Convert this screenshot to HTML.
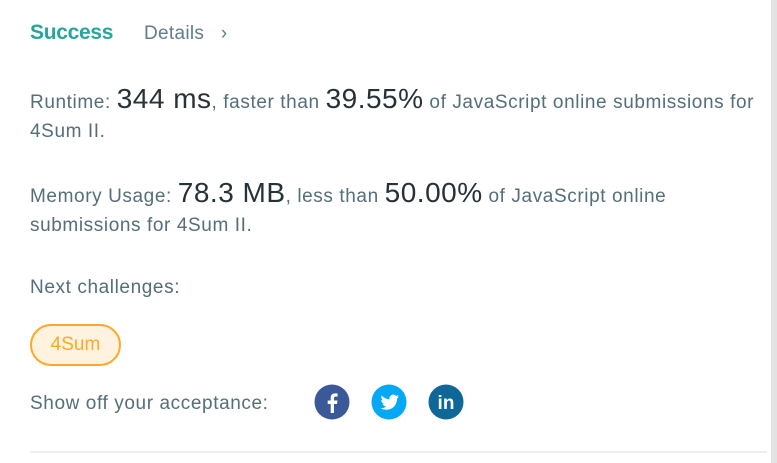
<!DOCTYPE html>
<html><head><meta charset="utf-8"><style>
body{margin:0;width:777px;height:463px;background:#fff;font-family:"Liberation Sans",sans-serif;color:#546e7a;position:relative;overflow:hidden}
.a{position:absolute;white-space:nowrap}
.t{font-size:19px;letter-spacing:0.6px}
.big{font-size:28px;color:#263238;letter-spacing:0.5px}
</style></head><body>
<div class="a" style="left:30px;top:21px;font-size:21px;font-weight:bold;color:#26a69a;letter-spacing:-0.3px">Success</div>
<div class="a" style="left:144px;top:23px;font-size:19px;color:#607d8b;letter-spacing:0.3px">Details &nbsp;&nbsp;›</div>
<div class="a t" style="left:30px;top:83px">Runtime: <span class="big">344 ms</span>, faster than <span class="big">39.55%</span> of JavaScript online submissions for</div>
<div class="a t" style="left:30px;top:121px">4Sum II.</div>
<div class="a t" style="left:30px;top:177px">Memory Usage: <span class="big">78.3 MB</span>, less than <span class="big">50.00%</span> of JavaScript online</div>
<div class="a t" style="left:30px;top:215px">submissions for 4Sum II.</div>
<div class="a t" style="left:30px;top:277px">Next challenges:</div>
<div class="a" style="left:30px;top:324px;width:87px;height:38px;border:2px solid #ffa726;border-radius:21px;background:#fff3e0;color:#ffa726;font-size:19px;text-align:center;line-height:38px">4Sum</div>
<div class="a t" style="left:30px;top:393px">Show off your acceptance:</div>
<svg class="a" style="left:310px;top:380px" width="160" height="44">
<circle cx="22" cy="22" r="17.5" fill="#3b5998"/>
<path d="M24 33v-9h3l.5-3.5H24v-2.2c0-1 .3-1.7 1.8-1.7h1.8v-3.1c-.3 0-1.4-.1-2.6-.1-2.6 0-4.3 1.6-4.3 4.4v2.7h-3V24h3v9z" fill="#fff"/>
<circle cx="79" cy="22" r="17.5" fill="#03a9f4"/>
<path d="M89 16.5c-.7.3-1.4.5-2.2.6.8-.5 1.4-1.2 1.7-2.1-.7.4-1.6.8-2.4.9a3.8 3.8 0 0 0-6.5 3.5c-3.2-.2-6-1.7-7.9-4-.9 1.7-.4 3.8 1.2 5-.6 0-1.2-.2-1.7-.5 0 1.9 1.3 3.5 3 3.8-.5.2-1.1.2-1.7.1.5 1.5 1.9 2.6 3.6 2.7-1.6 1.3-3.6 1.9-5.6 1.6 1.7 1.1 3.7 1.7 5.8 1.7 7 0 10.9-5.9 10.7-11.2.7-.5 1.4-1.2 1.9-2z" fill="#fff"/>
<circle cx="136" cy="22" r="17.5" fill="#0e6796"/>
<text x="136" y="29" text-anchor="middle" font-family="Liberation Sans" font-weight="bold" font-size="19" fill="#fff">in</text>
</svg>
<div class="a" style="left:30px;top:451px;width:737px;height:2px;background:#eeeeee"></div>
<div class="a" style="left:771px;top:0;width:6px;height:463px;background:#e3e3e3"></div>
</body></html>
